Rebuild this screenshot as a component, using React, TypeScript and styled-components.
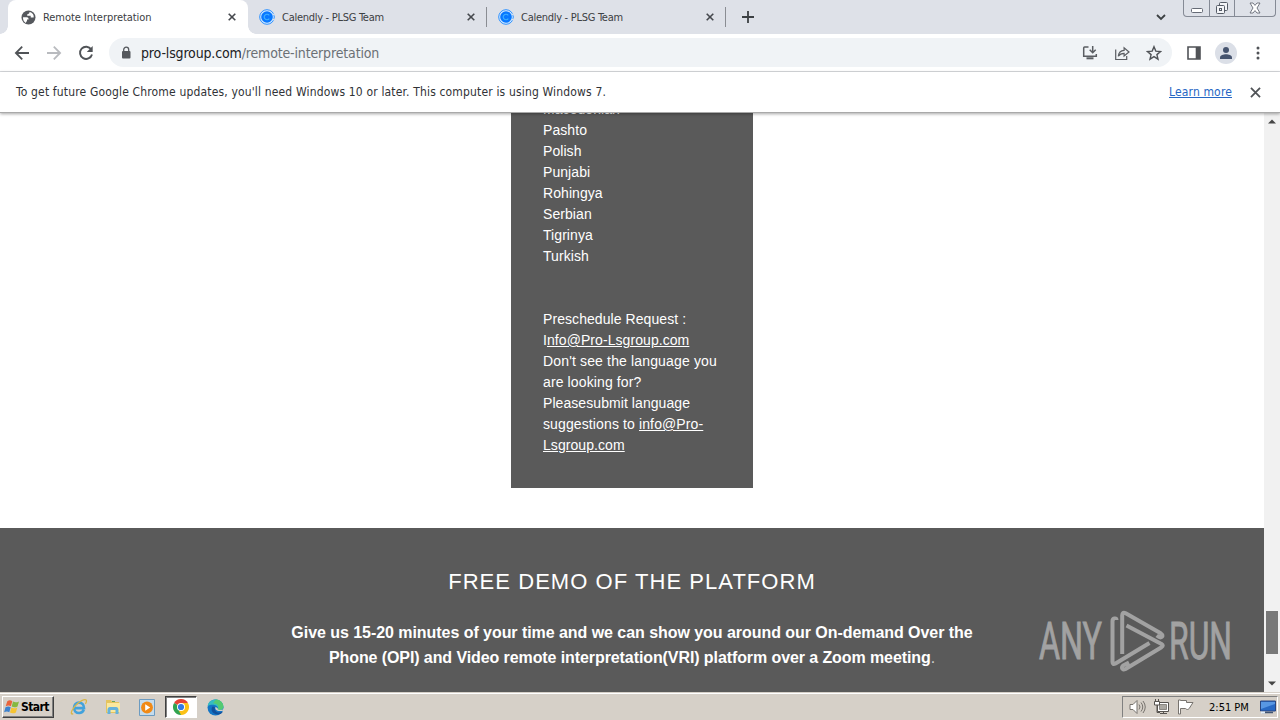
import React from "react"
import styled, { createGlobalStyle, css } from "styled-components"

const GlobalStyle = createGlobalStyle`
  * {
    box-sizing: border-box;
  }

  body {
    margin: 0;
    overflow: hidden;
  }

  svg {
    display: block;
    flex: none;
  }
`

const uiFont = css`
  font-family: "DejaVu Sans Condensed", "DejaVu Sans", sans-serif;
  font-stretch: condensed;
  white-space: nowrap;
`

const Screen = styled.div`
  width: 1280px;
  height: 720px;
  display: flex;
  flex-direction: column;
  position: relative;
  overflow: hidden;
  background: white;
`

const TabStrip = styled.div`
  height: 34px;
  display: flex;
  align-items: stretch;
  padding-left: 8px;
  background: #dee1e8;
`

const Tab = styled.div<{ $active?: boolean }>`
  ${uiFont}
  width: ${({ $active }) => ($active ? 240 : 239)}px;
  display: flex;
  align-items: center;
  padding: 0 10px 0 ${({ $active }) => ($active ? 13 : 11)}px;
  color: #3c4043;
  font-size: 11px;
  position: relative;
  ${({ $active }) =>
    $active &&
    css`
      background: white;
      border-radius: 8px 8px 0 0;

      &::before,
      &::after {
        content: "";
        position: absolute;
        bottom: 0;
        width: 8px;
        height: 8px;
      }
      &::before {
        left: -8px;
        background: radial-gradient(circle at 0 0, transparent 7.5px, white 8px);
      }
      &::after {
        right: -8px;
        background: radial-gradient(circle at 100% 0, transparent 7.5px, white 8px);
      }
    `}
`

const TabTitle = styled.span<{ $spacing: number }>`
  flex: 1;
  margin-left: 7px;
  letter-spacing: ${({ $spacing }) => $spacing}px;
`

const TabClose = styled.div`
  width: 12px;
  display: flex;
  justify-content: center;
`

const Separator = styled.div`
  width: 1px;
  height: 20px;
  margin: 7px 0 0 -1px;
  background: #8a8d93;
`

const NewTab = styled.div`
  display: flex;
  align-items: center;
  padding-left: 16px;
  flex: 1;
`

const TabSearch = styled.div`
  display: flex;
  align-items: center;
  margin-right: 17px;
`

const WindowButtons = styled.div`
  display: flex;
  height: 17px;
  width: 93px;
  margin-right: 4px;
  border: 1px solid #858a95;
  border-top: 0;
  border-radius: 0 0 4px 4px;
`

const WindowButton = styled.div<{ $width: number }>`
  width: ${({ $width }) => $width}px;
  height: 16px;
  display: flex;
  align-items: center;
  justify-content: center;

  & + & {
    border-left: 1px solid #858a95;
  }
`

const Toolbar = styled.div`
  height: 38px;
  display: flex;
  align-items: center;
  border-bottom: 1px solid #d9dbdf;
  background: white;
`

const ToolButton = styled.div`
  width: 32px;
  height: 32px;
  display: flex;
  align-items: center;
  justify-content: center;
`

const NavButtons = styled.div`
  display: flex;
  padding: 0 7px 0 6px;
`

const Omnibox = styled.div`
  width: 1063px;
  height: 29px;
  display: flex;
  align-items: center;
  border-radius: 15px;
  background: #f0f3f6;
  padding: 0 2px 0 11px;
`

const Url = styled.div`
  ${uiFont}
  flex: 1;
  margin-left: 9px;
  color: #202124;
  font-size: 14px;
  letter-spacing: -0.15px;

  span {
    color: #6b7075;
  }
`

const ToolbarEnd = styled.div`
  display: flex;
  padding-left: 6px;
`

const Avatar = styled.div`
  width: 22px;
  height: 22px;
  display: flex;
  align-items: center;
  justify-content: center;
  border-radius: 50%;
  background: #dbdfe7;
`

const InfoBar = styled.div`
  ${uiFont}
  height: 41px;
  display: flex;
  align-items: center;
  padding: 0 19px 0 16px;
  border-bottom: 1px solid #a9a9a9;
  background: white;
  color: #303236;
  font-size: 12px;
  position: relative;
  box-shadow: 0 1px 3px rgba(0, 0, 0, 0.35);
`

const InfoText = styled.span`
  flex: 1;
  letter-spacing: 0.16px;
`

const InfoLink = styled.a`
  margin-right: 18px;
  color: #2566c4;
  text-decoration: underline;
  letter-spacing: 0.15px;
`

const Viewport = styled.div`
  height: 579px;
  display: flex;
  overflow: hidden;
`

const Page = styled.main`
  width: 1264px;
  display: flex;
  flex-direction: column;
  align-items: center;
  font-family: "Liberation Sans", Arial, sans-serif;
  color: white;
`

const LanguagePanel = styled.section`
  width: 242px;
  height: 389px;
  flex: none;
  margin-top: -14px;
  padding: 0 32px 32px;
  background: #5a5a5a;
  font-size: 14px;
  line-height: 21px;
`

const Request = styled.div`
  margin-top: 42px;
`

const Line = styled.div<{ $spacing?: number }>`
  height: 21px;
  white-space: nowrap;
  letter-spacing: ${({ $spacing = 0.07 }) => $spacing}px;

  a {
    text-decoration: underline;
    text-underline-offset: 1px;
  }
`

const Demo = styled.section`
  width: 100%;
  flex: 1;
  margin-top: 40px;
  padding-top: 38px;
  background: #5a5a5a;
  text-align: center;

  h2 {
    margin: 0;
    font-size: 22px;
    font-weight: normal;
    line-height: 31px;
    letter-spacing: 1.05px;
  }
`

const DemoText = styled.div`
  margin-top: 23px;
  font-size: 16px;
  line-height: 25px;
  font-weight: bold;
  white-space: nowrap;
`

const DemoLine = styled.div<{ $spacing: number }>`
  letter-spacing: ${({ $spacing }) => $spacing}px;

  span {
    font-weight: normal;
    opacity: 0.7;
  }
`

const ScrollBar = styled.div`
  width: 16px;
  display: flex;
  flex-direction: column;
  align-items: center;
  background: #f1f1f1;
`

const ScrollArrow = styled.div`
  height: 17px;
  display: flex;
  align-items: center;
`

const ScrollTrack = styled.div`
  flex: 1;
  padding-top: 481px;
`

const ScrollThumb = styled.div`
  width: 12px;
  height: 43px;
  background: #787878;
`

const Watermark = styled.svg`
  position: absolute;
  left: 1036px;
  top: 606px;
  overflow: visible;
`

const Taskbar = styled.footer`
  ${uiFont}
  height: 28px;
  display: flex;
  align-items: center;
  padding: 1px 2px 0;
  background: #d6d0c8;
  border-top: 1px solid #d6d0c8;
  box-shadow: inset 0 1px 0 white;
  color: black;
  font-size: 11px;
`

const StartButton = styled.div`
  width: 52px;
  height: 22px;
  display: flex;
  align-items: center;
  gap: 1px;
  padding-left: 1px;
  border: 1px solid;
  border-color: white #404040 #404040 white;
  box-shadow: inset -1px -1px 0 #808080;
  font-size: 12px;
  font-weight: bold;
  letter-spacing: -0.55px;
`

const TaskItem = styled.div<{ $pressed?: boolean }>`
  width: ${({ $pressed }) => ($pressed ? 32 : 34)}px;
  height: 22px;
  display: flex;
  align-items: center;
  justify-content: center;
  ${({ $pressed }) =>
    $pressed &&
    css`
      margin: 0 1px;
      border: 1px solid;
      border-color: #404040 white white #404040;
      box-shadow: inset 1px 1px 0 #808080;
      background: white;
    `}
`

const TaskItems = styled.div`
  display: flex;
  flex: 1;
  padding-left: 8px;
`

const Tray = styled.div`
  width: 156px;
  height: 22px;
  display: flex;
  align-items: center;
  padding-left: 6px;
  border: 1px solid;
  border-color: #808080 white white #808080;
`

const Clock = styled.span`
  width: 51px;
  margin-left: 8px;
`

const TrayIcon = styled.div`
  width: 24px;
`

const CloseIcon = ({ size = 8, color = "#45484d" }) => (
  <svg width={size} height={size} viewBox="0 0 8 8">
    <path d="M.7.7l6.6 6.6M7.3.7L.7 7.3" stroke={color} strokeWidth={size > 8 ? 1.3 : 1.6} />
  </svg>
)

const GlobeIcon = () => (
  <svg width="15" height="15" viewBox="0 0 15 15">
    <circle cx="7.5" cy="7.5" r="7" fill="#55585d" />
    <path
      d="M2 7.2h3.8c1.6 0 1.8 1.1 1.8 2.2H6v1.4c-.2 1-1 1-1.1 2.1C3 11.9 1.8 9.7 2 7.2zM8.5 2C8.8 3.6 7 4 6.2 4.4v1.4h3.5v1.8h2.9c.7-2.4-1-5-4.1-5.6z"
      fill="white"
    />
  </svg>
)

const CalendlyIcon = () => (
  <svg width="16" height="16" viewBox="0 0 16 16">
    <circle cx="8" cy="8" r="7.3" fill="#d5eaff" stroke="#2d91ff" strokeWidth="1" />
    <circle cx="8" cy="8" r="5.8" fill="#0878ff" />
    <path
      d="M10.3 6.3C9.7 5.5 9 5.2 8 5.2a2.8 2.8 0 100 5.6c1 0 1.700-.3 2.300-1.100"
      fill="none"
      stroke="#3fb2ff"
      strokeWidth="1.1"
    />
    <path d="M14 5.2l1.7.7M14 10.8l1.7-.7" stroke="#dee1e8" strokeWidth="1.3" />
  </svg>
)

const BackIcon = ({ color = "#505357", flip = false }) => (
  <svg width="16" height="16" viewBox="0 0 16 16" transform={flip ? "scale(-1 1)" : undefined}>
    <path d="M15 8H2M8.2 1.7L1.9 8l6.3 6.3" fill="none" stroke={color} strokeWidth="1.8" />
  </svg>
)

const ReloadIcon = () => (
  <svg width="16" height="16" viewBox="0 0 16 16">
    <path d="M13.2 4.4A6.1 6.1 0 1014 9.5" fill="none" stroke="#505357" strokeWidth="1.9" />
    <path d="M14.7 1v6H8.8z" fill="#505357" />
  </svg>
)

const LockIcon = () => (
  <svg width="12" height="14" viewBox="0 0 12 14">
    <rect x="2" y="5" width="8.5" height="7.5" rx="1" fill="#55585d" />
    <path d="M3.7 5.5V3.7a2.5 2.5 0 015 0v1.8" fill="none" stroke="#55585d" strokeWidth="1.3" />
  </svg>
)

const InstallIcon = () => (
  <svg width="16" height="16" viewBox="0 0 16 16" fill="none" stroke="#5a5d62" strokeWidth="1.5">
    <path d="M6.5 2H2.6Q1.7 2 1.7 3v8.3h12.6V9" />
    <path d="M4.5 13.3h7" strokeWidth="2" />
    <path d="M10.7 1v6.3M7.7 4.8l3 3 3-3" />
  </svg>
)

const ShareIcon = () => (
  <svg width="16" height="16" viewBox="0 0 16 16" fill="none" stroke="#5a5d62" strokeWidth="1.2">
    <path d="M1.7 4.5v10h11V11" />
    <path d="M4.3 11.3c.4-4 2.6-5.8 5.8-5.9V2.8L15 7l-4.9 4V8.3c-2.5 0-4.4.8-5.8 3z" />
  </svg>
)

const StarIcon = () => (
  <svg width="16" height="16" viewBox="0 0 16 16">
    <path
      d="M8 1.7l1.8 4.4 4.7.4-3.6 3.1 1.1 4.6-4-2.5-4 2.5 1.1-4.6-3.6-3.1 4.7-.4z"
      fill="none"
      stroke="#505357"
      strokeWidth="1.4"
    />
  </svg>
)

const SidePanelIcon = () => (
  <svg width="14" height="14" viewBox="0 0 14 14">
    <path d="M1 1h12v12H1z" fill="none" stroke="#505357" strokeWidth="1.6" />
    <path d="M8.7 1H13v12H8.7z" fill="#505357" />
  </svg>
)

const PersonIcon = () => (
  <svg width="14" height="14" viewBox="0 0 14 14" fill="#46546f">
    <circle cx="7" cy="4" r="3" />
    <path d="M1 13v-1.5C1 9.2 4.5 8.2 7 8.2s6 1 6 3.3V13z" />
  </svg>
)

const MenuIcon = () => (
  <svg width="4" height="14" viewBox="0 0 4 14" fill="#505357">
    <circle cx="2" cy="2" r="1.5" />
    <circle cx="2" cy="7" r="1.5" />
    <circle cx="2" cy="12" r="1.5" />
  </svg>
)

const Arrow = ({ down = false }) => (
  <svg width="8" height="5" viewBox="0 0 8 5">
    <path d={down ? "M0 .5h8l-4 4z" : "M0 4.5h8l-4-4z"} fill="#454545" />
  </svg>
)

const WindowsFlag = () => (
  <svg width="16" height="16" viewBox="0 0 16 16">
    <path d="M3.3 2.2c2-1.3 3.5-1 5 0L6.9 7.3c-1.7-1-3.2-1-5.2 0z" fill="#e9643b" />
    <path d="M9 2.6c2 1 3.7 1 6-.2l-1.5 5c-2 1.2-3.8 1.2-5.8.2z" fill="#86b83f" />
    <path d="M1.5 8.2c2-1 3.5-1 5.2 0l-1.4 5c-1.7-1-3.1-1-5.2 0z" fill="#3d82ce" />
    <path d="M7.4 8.5c2 1 3.7 1 5.9-.1l-1.4 5c-2 1.3-3.9 1.2-5.9.2z" fill="#f6c433" />
  </svg>
)

const ExplorerIcon = () => (
  <svg width="18" height="18" viewBox="0 0 18 18">
    <path
      d="M13.8 11.8A5 5 0 019.1 15C6 15 4 12.7 4 9.8s2-5.2 5-5.2 5 2.2 5 5.5H4.5"
      fill="none"
      stroke="#42a2dc"
      strokeWidth="2.6"
    />
    <path
      d="M3.2 15.7C1.3 16.7.8 15 2 12.5 4.3 7.7 11 1.8 15 1.6c2-.1 1.7 2.2.4 4.3"
      fill="none"
      stroke="#d9b647"
      strokeWidth="1.3"
    />
  </svg>
)

const FolderIcon = () => (
  <svg width="18" height="18" viewBox="0 0 18 18">
    <path d="M2 2h5l1 2h7v11H2z" fill="#e5c45e" />
    <path d="M3 5h13v9H3z" fill="#fae89e" />
    <path d="M3.5 16v-4c0-2 1-3 2.5-3h6c1.5 0 2.5 1 2.5 3v4h-3v-4h-5v4z" fill="#65b2db" />
    <path d="M8 3.5h3" stroke="#68a65b" />
  </svg>
)

const MediaIcon = () => (
  <svg width="16" height="17" viewBox="0 0 16 17">
    <path d="M.5.5h15v16H.5z" fill="#c5dced" stroke="#6c9bc1" />
    <circle cx="8" cy="8.5" r="5.9" fill="#f18a16" />
    <path d="M6.2 5.2v6.6l5-3.3z" fill="white" />
  </svg>
)

const ChromeIcon = () => (
  <svg width="16" height="16" viewBox="0 0 16 16">
    <path d="M8 8L1.07 4A8 8 0 0114.93 4z" fill="#e54335" />
    <path d="M8 8l6.93-4A8 8 0 018 16z" fill="#fbc116" />
    <path d="M8 8v8A8 8 0 011.07 4z" fill="#31a350" />
    <path d="M8 4h6.93L11.5 10z" fill="#fbc116" />
    <path d="M11.5 10L8 16l-2-4z" fill="#fbc116" />
    <circle cx="8" cy="8" r="4" fill="white" />
    <circle cx="8" cy="8" r="3.1" fill="#327ae5" />
  </svg>
)

const EdgeIcon = () => (
  <svg width="17" height="17" viewBox="0 0 17 17">
    <circle cx="8.5" cy="8.5" r="8" fill="#1475c5" />
    <path d="M.7 7C2-1.5 15-1.6 16.4 7.2c.3 3-2.6 4.3-5.5 3.4 1.3-4.7-6-6.1-10.2-3.6z" fill="#35bcc1" />
    <path d="M9 .6c4 .2 7 3 7.4 6.6.2 3-2.6 4.3-5.5 3.4C12.5 6.5 10 4.5 6 4.2z" fill="#54ca72" />
    <path d="M5.5 7.5c-3 4.2 1.5 8.7 7 7.8 1.7-.4 2.8-1.5 3.3-2.5-5.2 2-8.6-.3-8-4.8z" fill="#12509b" />
    <path d="M8.5 8c-1.2 3 2.4 5.2 8.5 3.4V9.9c-2 1.2-4.8 1.2-6.1.7.3-1.1-.8-2.3-2.4-2.6z" fill="#d6d0c8" />
  </svg>
)

const SpeakerIcon = () => (
  <svg width="17" height="16" viewBox="0 0 17 16" fill="none" stroke="#77736e">
    <path d="M1 5.5h3l4-4v13l-4-4H1z" fill="white" />
    <path d="M10 5.5q2 2.5 0 5M12 3.5q3.5 4.5 0 9M14 2q4.5 6 0 12" />
  </svg>
)

const NetworkIcon = () => (
  <svg width="17" height="16" viewBox="0 0 17 16" fill="none" stroke="#56534f">
    <path d="M4.5 3.5h11v9h-11z" fill="white" />
    <path d="M6.5 5.5h7v5h-7z" fill="#aaa7a1" stroke="#8a8782" />
    <path d="M7 14.5h7M10.5 12.5v2M4 6v7.5h3" />
    <path d="M1.5 2.5h5V6h-5zM2.5 0v2.5M5.5 0v2.5" fill="white" />
  </svg>
)

const FlagIcon = () => (
  <svg width="17" height="16" viewBox="0 0 17 16" fill="white" stroke="#77736e">
    <path d="M1.5 1v14h2V9.5h5c2 2 3.5.5 4-.5l3.5-5.5H9.5v-2h-6V1z" />
  </svg>
)

const MonitorIcon = () => (
  <svg width="16" height="14" viewBox="0 0 16 14">
    <path d="M.5 1h15v10H.5z" fill="#2869c4" stroke="#2a4680" />
    <path d="M1 2h14v2L1 9z" fill="#5897e3" />
    <path d="M2 12.5h11" stroke="#405472" strokeWidth="1.5" />
    <path d="M1 11.5h4v2H1z" fill="#e2edf7" />
  </svg>
)

const languages = ["Macedonian", "Pashto", "Polish", "Punjabi", "Rohingya", "Serbian", "Tigrinya", "Turkish"]

const BrowserTabs = () => (
  <TabStrip>
    <Tab $active>
      <GlobeIcon />
      <TabTitle $spacing={-0.05}>Remote Interpretation</TabTitle>
      <TabClose>
        <CloseIcon />
      </TabClose>
    </Tab>
    {[0, 1].map((tab) => (
      <React.Fragment key={tab}>
        <Tab>
          <CalendlyIcon />
          <TabTitle $spacing={-0.28}>Calendly - PLSG Team</TabTitle>
          <TabClose>
            <CloseIcon />
          </TabClose>
        </Tab>
        <Separator />
      </React.Fragment>
    ))}
    <NewTab>
      <svg width="12" height="12" viewBox="0 0 12 12">
        <path d="M6 0v12M0 6h12" stroke="#3c4043" strokeWidth="1.8" />
      </svg>
    </NewTab>
    <TabSearch>
      <svg width="10" height="7" viewBox="0 0 10 7">
        <path d="M1 1l4 4 4-4" fill="none" stroke="#3c4043" strokeWidth="1.8" />
      </svg>
    </TabSearch>
    <WindowButtons>
      <WindowButton $width={25}>
        <svg width="12" height="14" viewBox="0 0 12 14">
          <rect x=".5" y="7.5" width="11" height="4" rx="1" fill="white" stroke="#666b76" />
        </svg>
      </WindowButton>
      <WindowButton $width={25}>
        <svg width="14" height="14" viewBox="0 0 14 14" fill="#f3f4f7" stroke="#555b66">
          <rect x="4.5" y="1.5" width="8" height="8" rx="1" />
          <rect x="1.5" y="4.5" width="8" height="8" rx="1" />
          <rect x="4.5" y="7.5" width="2" height="2" />
        </svg>
      </WindowButton>
      <WindowButton $width={41}>
        <svg width="12" height="12" viewBox="0 0 12 12">
          <path
            d="M1 1h3l2 2.4L8 1h3L8 6l3 5H8L6 8.6 4 11H1l3-5z"
            fill="white"
            stroke="#666b76"
            strokeWidth=".9"
          />
        </svg>
      </WindowButton>
    </WindowButtons>
  </TabStrip>
)

const BrowserToolbar = () => (
  <Toolbar>
    <NavButtons>
      <ToolButton>
        <BackIcon />
      </ToolButton>
      <ToolButton>
        <BackIcon color="#b9bbbf" flip />
      </ToolButton>
      <ToolButton>
        <ReloadIcon />
      </ToolButton>
    </NavButtons>
    <Omnibox>
      <LockIcon />
      <Url>
        pro-lsgroup.com<span>/remote-interpretation</span>
      </Url>
      <ToolButton>
        <InstallIcon />
      </ToolButton>
      <ToolButton>
        <ShareIcon />
      </ToolButton>
      <ToolButton>
        <StarIcon />
      </ToolButton>
    </Omnibox>
    <ToolbarEnd>
      <ToolButton>
        <SidePanelIcon />
      </ToolButton>
      <ToolButton>
        <Avatar>
          <PersonIcon />
        </Avatar>
      </ToolButton>
      <ToolButton>
        <MenuIcon />
      </ToolButton>
    </ToolbarEnd>
  </Toolbar>
)

const App = () => (
  <>
    <GlobalStyle />
    <Screen>
      <BrowserTabs />
      <BrowserToolbar />
      <InfoBar>
        <InfoText>
          To get future Google Chrome updates, you'll need Windows 10 or later. This computer is using Windows 7.
        </InfoText>
        <InfoLink>Learn more</InfoLink>
        <CloseIcon size={11} color="#505357" />
      </InfoBar>
      <Viewport>
        <Page>
          <LanguagePanel>
            {languages.map((language) => (
              <Line key={language}>{language}</Line>
            ))}
            <Request>
              <Line>Preschedule Request :</Line>
              <Line>
                I<a>nfo@Pro-Lsgroup.com</a>
              </Line>
              <Line $spacing={0.15}>Don't see the language you</Line>
              <Line $spacing={0.12}>are looking for?</Line>
              <Line>Pleasesubmit language</Line>
              <Line $spacing={0.12}>
                suggestions to <a>info@Pro-</a>
              </Line>
              <Line>
                <a>Lsgroup.com</a>
              </Line>
            </Request>
          </LanguagePanel>
          <Demo>
            <h2>FREE DEMO OF THE PLATFORM</h2>
            <DemoText>
              <DemoLine $spacing={-0.05}>
                Give us 15-20 minutes of your time and we can show you around our On-demand Over the
              </DemoLine>
              <DemoLine $spacing={-0.09}>
                Phone (OPI) and Video remote interpretation(VRI) platform over a Zoom meeting<span>.</span>
              </DemoLine>
            </DemoText>
          </Demo>
        </Page>
        <ScrollBar>
          <ScrollArrow>
            <Arrow />
          </ScrollArrow>
          <ScrollTrack>
            <ScrollThumb />
          </ScrollTrack>
          <ScrollArrow>
            <Arrow down />
          </ScrollArrow>
        </ScrollBar>
      </Viewport>
      <Taskbar>
        <StartButton>
          <WindowsFlag />
          Start
        </StartButton>
        <TaskItems>
          <TaskItem>
            <ExplorerIcon />
          </TaskItem>
          <TaskItem>
            <FolderIcon />
          </TaskItem>
          <TaskItem>
            <MediaIcon />
          </TaskItem>
          <TaskItem $pressed>
            <ChromeIcon />
          </TaskItem>
          <TaskItem>
            <EdgeIcon />
          </TaskItem>
        </TaskItems>
        <Tray>
          <TrayIcon>
            <SpeakerIcon />
          </TrayIcon>
          <TrayIcon>
            <NetworkIcon />
          </TrayIcon>
          <TrayIcon>
            <FlagIcon />
          </TrayIcon>
          <Clock>2:51 PM</Clock>
          <MonitorIcon />
        </Tray>
      </Taskbar>
      <Watermark width="200" height="70" viewBox="0 0 200 70">
        <g fill="#a2a2a2" stroke="#a2a2a2" strokeWidth=".9" fontFamily="Roboto, sans-serif" fontSize="51.5">
          <text x="3" y="53.3" textLength="63" lengthAdjust="spacingAndGlyphs">
            ANY
          </text>
          <text x="133" y="53.3" textLength="63" lengthAdjust="spacingAndGlyphs">
            RUN
          </text>
        </g>
        <g fill="none" stroke="#a2a2a2" strokeWidth="4" strokeLinejoin="round">
          <path d="M80.5 14q0-2-2-1.5-2 .5-2 2.5v41q0 3 3 1.5l34-20.5" />
          <path d="M86.2 48V9.5q0-4 3.5-2.2l35 20q3 2 1 3.7-1.500 1.200-5-1.500" />
          <path d="M90.5 19.5l35 18.5q2.5 1.5 0 3.2L89.5 63q-3 1.5-3.5-1.2-.2-2 3-3.3l4-2" />
        </g>
      </Watermark>
    </Screen>
  </>
)

export default App
